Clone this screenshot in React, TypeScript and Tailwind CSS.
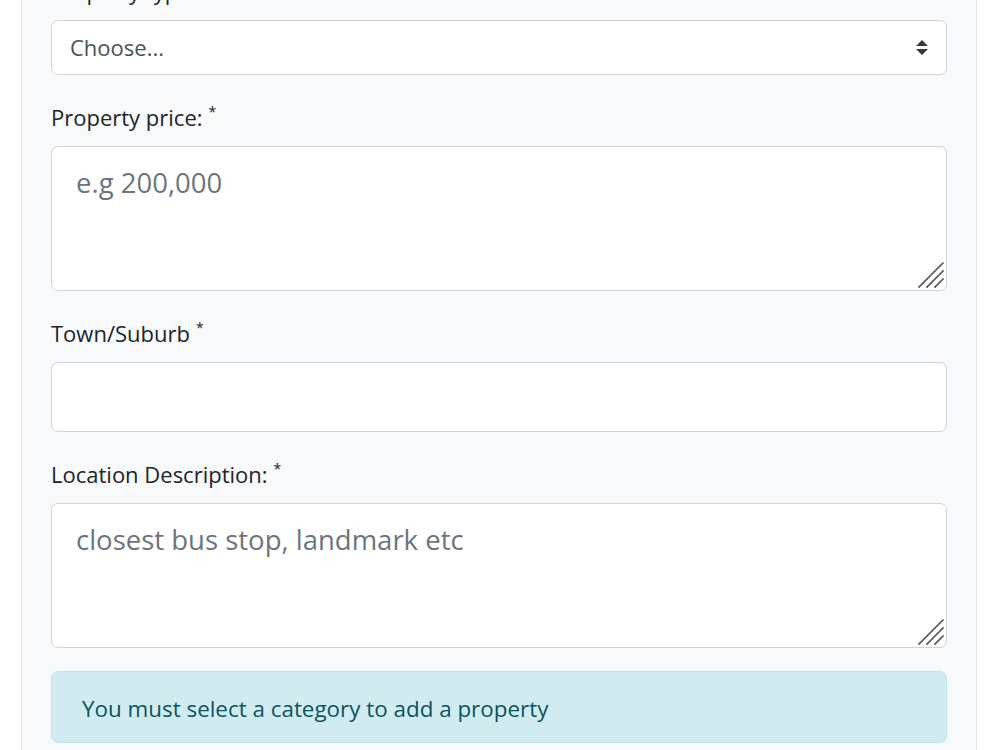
import React from "react";

const font = { fontFamily: '"Open Sans", "Noto Sans", sans-serif' };

function Grip() {
  return (
    <svg
      className="absolute right-[2px] bottom-[2px]"
      width="28"
      height="28"
      viewBox="0 0 28 28"
      aria-hidden="true"
    >
      <g stroke="#5f5f5f" strokeWidth="1.8" strokeDasharray="2.4 1.1" strokeLinecap="round">
        <line x1="2" y1="26" x2="26" y2="2" />
        <line x1="10" y1="26" x2="26" y2="10" />
        <line x1="18" y1="26" x2="26" y2="18" />
      </g>
    </svg>
  );
}

function Label({ children, star = true }: { children: React.ReactNode; star?: boolean }) {
  return (
    <label className="block h-[30px] leading-[30px] text-[22px] text-[#212529] mb-[14px] whitespace-nowrap">
      {children}
      {star && <span className="relative top-[-9px] ml-[6px] text-[14px]">*</span>}
    </label>
  );
}

function TextArea({ placeholder }: { placeholder: string }) {
  return (
    <div className="relative">
      <textarea
        placeholder={placeholder}
        className="block w-full h-[145px] resize-none rounded-[7px] border border-[#ced4da] bg-white px-[24px] pt-[17px] pb-[13px] text-[27.5px] leading-[38px] text-[#495057] placeholder:text-[#6c757d] outline-none"
        style={font}
      />
      <Grip />
    </div>
  );
}

export default function App() {
  return (
    <div className="w-[1000px] h-[750px] overflow-hidden bg-white" style={font}>
      <div className="ml-[21px] w-[956px] mt-[-24px] min-h-[800px] bg-[#f8f9fa] border-x border-[#e3e6e9] px-[29px]">
        <div className="mb-[27px]">
          <Label>Property type:</Label>
          <div className="relative flex items-center h-[55px] rounded-[7px] border border-[#ced4da] bg-white pl-[18px] pr-[18px]">
            <span className="text-[22px] text-[#495057]">Choose...</span>
            <svg className="ml-auto" width="12" height="15" viewBox="0 0 4 5" aria-hidden="true">
              <path fill="#343a40" d="M2 0L0 2h4zm0 5L0 3h4z" />
            </svg>
          </div>
        </div>

        <div className="mb-[27px]">
          <Label>Property price:</Label>
          <TextArea placeholder="e.g 200,000" />
        </div>

        <div className="mb-[27px]">
          <Label>Town/Suburb</Label>
          <input
            type="text"
            className="block w-full h-[70px] rounded-[7px] border border-[#ced4da] bg-white px-[24px] text-[27.5px] outline-none"
            style={font}
          />
        </div>

        <div className="mb-[23px]">
          <Label>Location Description:</Label>
          <TextArea placeholder="closest bus stop, landmark etc" />
        </div>

        <div className="flex items-center h-[72px] rounded-[7px] border border-[#bee5eb] bg-[#d1ecf1] px-[30px] pt-[4px] text-[22.4px] text-[#0c5460]">
          You must select a category to add a property
        </div>
      </div>
    </div>
  );
}
